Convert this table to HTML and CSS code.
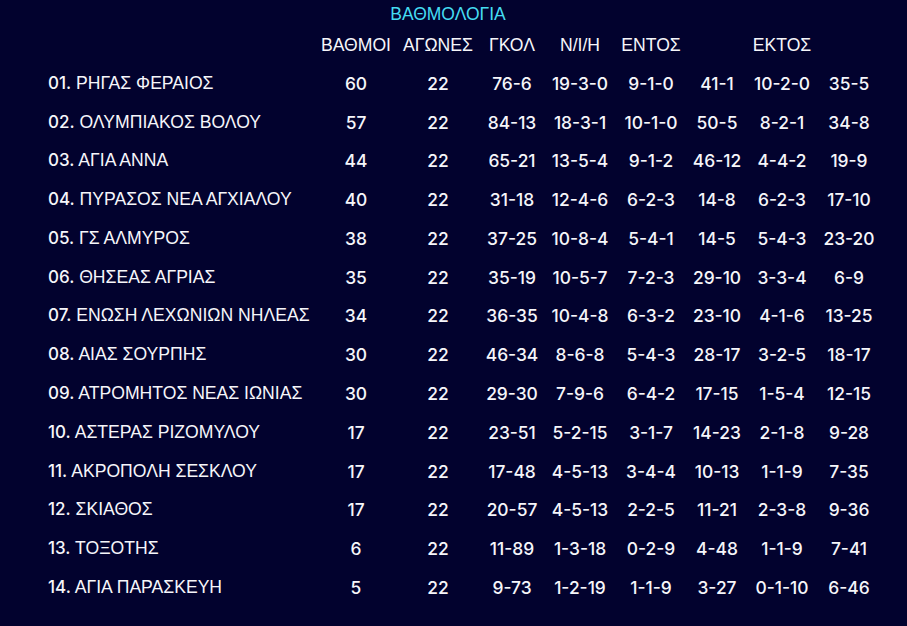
FILE: index.html
```html
<!DOCTYPE html>
<html lang="el">
<head>
<meta charset="utf-8">
<title>ΒΑΘΜΟΛΟΓΙΑ</title>
<link rel="stylesheet" href="styles.css">
</head>
<body>
<main class="standings">
  <h1 class="title">ΒΑΘΜΟΛΟΓΙΑ</h1>
  <div class="table">
    <div class="row head">
      <span class="name"></span>
      <span>ΒΑΘΜΟΙ</span><span>ΑΓΩΝΕΣ</span><span>ΓΚΟΛ</span><span>Ν/Ι/Η</span>
      <span>ΕΝΤΟΣ</span><span></span><span>ΕΚΤΟΣ</span><span></span>
    </div>
    <div class="row"><span class="name"><b class="pos">01.</b> ΡΗΓΑΣ ΦΕΡΑΙΟΣ</span><span>60</span><span>22</span><span>76-6</span><span>19-3-0</span><span>9-1-0</span><span>41-1</span><span>10-2-0</span><span>35-5</span></div>
    <div class="row"><span class="name"><b class="pos">02.</b> ΟΛΥΜΠΙΑΚΟΣ ΒΟΛΟΥ</span><span>57</span><span>22</span><span>84-13</span><span>18-3-1</span><span>10-1-0</span><span>50-5</span><span>8-2-1</span><span>34-8</span></div>
    <div class="row"><span class="name"><b class="pos">03.</b> ΑΓΙΑ ΑΝΝΑ</span><span>44</span><span>22</span><span>65-21</span><span>13-5-4</span><span>9-1-2</span><span>46-12</span><span>4-4-2</span><span>19-9</span></div>
    <div class="row"><span class="name"><b class="pos">04.</b> ΠΥΡΑΣΟΣ ΝΕΑ ΑΓΧΙΑΛΟΥ</span><span>40</span><span>22</span><span>31-18</span><span>12-4-6</span><span>6-2-3</span><span>14-8</span><span>6-2-3</span><span>17-10</span></div>
    <div class="row"><span class="name"><b class="pos">05.</b> ΓΣ ΑΛΜΥΡΟΣ</span><span>38</span><span>22</span><span>37-25</span><span>10-8-4</span><span>5-4-1</span><span>14-5</span><span>5-4-3</span><span>23-20</span></div>
    <div class="row"><span class="name"><b class="pos">06.</b> ΘΗΣΕΑΣ ΑΓΡΙΑΣ</span><span>35</span><span>22</span><span>35-19</span><span>10-5-7</span><span>7-2-3</span><span>29-10</span><span>3-3-4</span><span>6-9</span></div>
    <div class="row"><span class="name"><b class="pos">07.</b> ΕΝΩΣΗ ΛΕΧΩΝΙΩΝ ΝΗΛΕΑΣ</span><span>34</span><span>22</span><span>36-35</span><span>10-4-8</span><span>6-3-2</span><span>23-10</span><span>4-1-6</span><span>13-25</span></div>
    <div class="row"><span class="name"><b class="pos">08.</b> ΑΙΑΣ ΣΟΥΡΠΗΣ</span><span>30</span><span>22</span><span>46-34</span><span>8-6-8</span><span>5-4-3</span><span>28-17</span><span>3-2-5</span><span>18-17</span></div>
    <div class="row"><span class="name"><b class="pos">09.</b> ΑΤΡΟΜΗΤΟΣ ΝΕΑΣ ΙΩΝΙΑΣ</span><span>30</span><span>22</span><span>29-30</span><span>7-9-6</span><span>6-4-2</span><span>17-15</span><span>1-5-4</span><span>12-15</span></div>
    <div class="row"><span class="name"><b class="pos">10.</b> ΑΣΤΕΡΑΣ ΡΙΖΟΜΥΛΟΥ</span><span>17</span><span>22</span><span>23-51</span><span>5-2-15</span><span>3-1-7</span><span>14-23</span><span>2-1-8</span><span>9-28</span></div>
    <div class="row"><span class="name"><b class="pos">11.</b> ΑΚΡΟΠΟΛΗ ΣΕΣΚΛΟΥ</span><span>17</span><span>22</span><span>17-48</span><span>4-5-13</span><span>3-4-4</span><span>10-13</span><span>1-1-9</span><span>7-35</span></div>
    <div class="row"><span class="name"><b class="pos">12.</b> ΣΚΙΑΘΟΣ</span><span>17</span><span>22</span><span>20-57</span><span>4-5-13</span><span>2-2-5</span><span>11-21</span><span>2-3-8</span><span>9-36</span></div>
    <div class="row"><span class="name"><b class="pos">13.</b> ΤΟΞΟΤΗΣ</span><span>6</span><span>22</span><span>11-89</span><span>1-3-18</span><span>0-2-9</span><span>4-48</span><span>1-1-9</span><span>7-41</span></div>
    <div class="row"><span class="name"><b class="pos">14.</b> ΑΓΙΑ ΠΑΡΑΣΚΕΥΗ</span><span>5</span><span>22</span><span>9-73</span><span>1-2-19</span><span>1-1-9</span><span>3-27</span><span>0-1-10</span><span>6-46</span></div>
  </div>
</main>
</body>
</html>
```

FILE: styles.css
```css
html, body {
  margin: 0;
  padding: 0;
  background: #02022e;
}
body {
  width: 907px;
  height: 626px;
  overflow: hidden;
  color: #f6f6fa;
  font-family: "Liberation Sans", Arial, sans-serif;
  font-size: 17.6px;
}
.standings {
  padding-top: 3px;
}
.title {
  margin: 0;
  height: 22px;
  line-height: 22px;
  text-align: center;
  width: 896px;
  font-size: 17.5px;
  font-weight: normal;
  color: #45dcf2;
}
.table {
  display: flex;
  flex-direction: column;
  padding-left: 48px;
}
.row {
  display: grid;
  grid-template-columns: 268px 80px 84px 64px 72px 70px 62px 68px 66px;
  height: 38.77px;
  align-items: center;
}
.row.head {
  height: 38px;
  margin-top: 1px;
}
.row > span {
  text-align: center;
  white-space: nowrap;
  font-family: Inter, "Liberation Sans", sans-serif;
  font-size: 17.4px;
  font-weight: 500;
}
.row.head > span {
  font-family: "Liberation Sans", Arial, sans-serif;
  font-size: 17.6px;
  font-weight: normal;
}
.row > .name {
  text-align: left;
  font-family: "Liberation Sans", Arial, sans-serif;
  font-size: 17.6px;
  font-weight: normal;
}
.pos {
  font-family: Inter, "Liberation Sans", sans-serif;
  font-size: 17px;
  font-weight: 500;
}
```
